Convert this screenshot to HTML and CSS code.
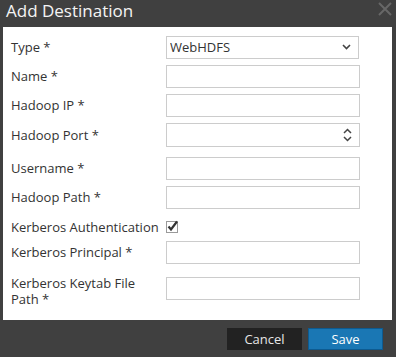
FILE: index.html
```html
<!DOCTYPE html>
<html lang="en">
<head>
    <meta charset="UTF-8">
    <meta name="viewport" content="width=device-width, initial-scale=1.0">
    <title>Add Destination</title>
    <link rel="stylesheet" href="styles.css">
</head>
<body>
    <div class="dialog">
        <div class="dialog-header">
            <h1>Add Destination</h1>
            <svg class="close" width="14" height="14" viewBox="0 0 14 14">
                <path d="M1 1 L13 13 M13 1 L1 13" stroke="#676767" stroke-width="2" fill="none"/>
            </svg>
        </div>

        <div class="dialog-body">
            <div class="row">
                <label>Type *</label>
                <div class="field">
                    <select class="input select">
                        <option>WebHDFS</option>
                    </select>
                    <svg class="field-icon" width="9" height="6" viewBox="0 0 9 6">
                        <path d="M1 1 L4.5 4.5 L8 1" stroke="#444" stroke-width="1.6" fill="none"/>
                    </svg>
                </div>
            </div>
            <div class="row">
                <label>Name *</label>
                <input class="input" type="text">
            </div>
            <div class="row">
                <label>Hadoop IP *</label>
                <input class="input" type="text">
            </div>
            <div class="row row-port">
                <label>Hadoop Port *</label>
                <div class="field">
                    <input class="input input-port" type="text">
                    <svg class="field-icon" width="9" height="14" viewBox="0 0 9 14">
                        <path d="M1 5 L4.5 1.5 L8 5 M1 9 L4.5 12.5 L8 9" stroke="#444" stroke-width="1.5" fill="none"/>
                    </svg>
                </div>
            </div>
            <div class="row">
                <label>Username *</label>
                <input class="input" type="text">
            </div>
            <div class="row">
                <label>Hadoop Path *</label>
                <input class="input" type="text">
            </div>
            <div class="row row-check">
                <label>Kerberos Authentication</label>
                <svg class="checkbox" width="13" height="13" viewBox="0 0 13 13">
                    <rect x="0.5" y="1.5" width="11" height="11" fill="#fff" stroke="#9a9a9a"/>
                    <path d="M2.5 6.5 L5 9.5 L11 1.5" stroke="#333" stroke-width="2.2" fill="none"/>
                </svg>
            </div>
            <div class="row">
                <label>Kerberos Principal *</label>
                <input class="input" type="text">
            </div>
            <div class="row row-tall">
                <label>Kerberos Keytab File Path *</label>
                <input class="input" type="text">
            </div>
        </div>

        <div class="dialog-footer">
            <button class="btn btn-cancel">Cancel</button>
            <button class="btn btn-save">Save</button>
        </div>
    </div>
</body>
</html>
```

FILE: styles.css
```css
body {
    margin: 0;
    background-color: #404040;
    font-family: "Open Sans", "Liberation Sans", sans-serif;
    color: #333;
}
.dialog {
    width: 396px;
    height: 357px;
    background-color: #404040;
}
.dialog-header {
    height: 27px;
    display: flex;
    justify-content: space-between;
    padding: 0 4px 0 6px;
}
.dialog-header h1 {
    margin: 0;
    font-size: 17px;
    font-weight: normal;
    line-height: 22px;
    color: #f4f4f4;
}
.close {
    margin-top: 2px;
}
.dialog-body {
    display: flex;
    flex-direction: column;
    background-color: #fff;
    margin: 0 4px 0 3px;
    height: 293px;
    box-sizing: border-box;
    padding: 8px 0 0 8px;
}
.row {
    display: flex;
    align-items: center;
    margin-bottom: 6px;
}
.row label {
    width: 155px;
    font-size: 13px;
    line-height: 18px;
    flex-shrink: 0;
}
.field {
    position: relative;
}
.input {
    width: 194px;
    height: 23px;
    box-sizing: border-box;
    border: 1px solid #ccc;
    border-radius: 0;
    background-color: #fff;
    padding: 0 4px;
    font-family: "Open Sans", "Liberation Sans", sans-serif;
    font-size: 13px;
    color: #333;
    margin: 0;
}
.select {
    width: 193px;
    appearance: none;
    -webkit-appearance: none;
    padding-left: 3px;
}
.input-port {
    height: 24px;
}
.field-icon {
    position: absolute;
    right: 8px;
    top: 50%;
    transform: translateY(-50%);
}
.row-port {
    margin-bottom: 10px;
}
.row-check {
    margin-top: 6px;
    margin-bottom: 8px;
    height: 12px;
}
.checkbox {
    margin-top: -1px;
}
.row-tall {
    margin-top: 7px;
    align-items: flex-start;
}
.row-tall label {
    line-height: 16px;
    margin-top: -2px;
}
.dialog-footer {
    display: flex;
    justify-content: flex-end;
    gap: 6px;
    padding: 8px 13px 0 0;
}
.btn {
    width: 75px;
    height: 22px;
    border: 1px solid transparent;
    font-family: "Open Sans", "Liberation Sans", sans-serif;
    font-size: 13px;
    color: #fff;
    padding: 0;
    cursor: pointer;
}
.btn-cancel {
    background-color: #222;
    border-color: #222;
    color: #e6e6e6;
}
.btn-save {
    background-color: #1a77b4;
    border-color: #0d5b91;
}
```
